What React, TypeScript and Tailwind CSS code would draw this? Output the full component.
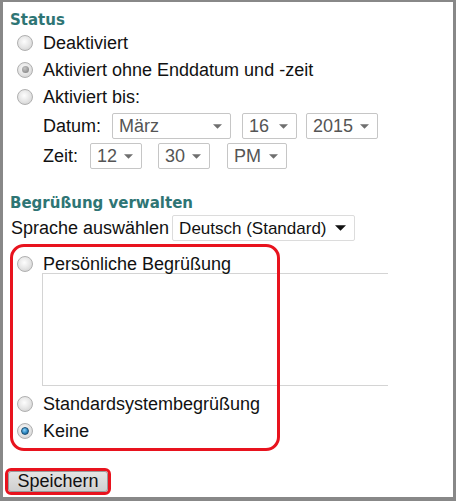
import React from 'react';

const Radio: React.FC<{ state?: 'off' | 'gray' | 'blue' }> = ({ state = 'off' }) => (
  <span className="relative flex h-[16px] w-[16px] shrink-0 items-center justify-center rounded-full border border-[#b0b0b0] bg-[radial-gradient(circle_at_45%_40%,#fdfdfd_0%,#e6e6e6_50%,#c9c9c9_100%)]">
    {state === 'gray' && <span className="h-[7px] w-[7px] rounded-full bg-[radial-gradient(circle_at_40%_35%,#c4c4c4_0%,#7a7a7a_100%)]" />}
    {state === 'blue' && (
      <span className="h-[8px] w-[8px] rounded-full border border-[#1b4f74] bg-[radial-gradient(circle_at_40%_35%,#8fd3fa_0%,#2e8ac4_55%,#144d78_100%)]" />
    )}
  </span>
);

const Arrow: React.FC<{ dark?: boolean }> = ({ dark }) => (
  <svg width={dark ? 11 : 9} height={dark ? 6 : 5} viewBox="0 0 10 5" className="shrink-0">
    <path d="M0 0 L10 0 L5 5 Z" fill={dark ? '#111' : '#6f6f6f'} />
  </svg>
);

const Select: React.FC<{ value: string; width: string; dark?: boolean }> = ({ value, width, dark }) => (
  <div
    className={`flex h-[26px] items-center justify-between whitespace-nowrap rounded-[2px] border pl-[6px] ${width} ${
      dark ? 'border-[#dcdcdc] pr-[8px] text-[17px] text-[#111]' : 'border-[#c6c6c6] pr-[8px] text-[#555]'
    }`}
  >
    <span className="leading-none">{value}</span>
    <Arrow dark={dark} />
  </div>
);

const RadioRow: React.FC<{ label: string; state?: 'off' | 'gray' | 'blue' }> = ({ label, state }) => (
  <div className="flex h-[27px] items-center pl-[14px]">
    <Radio state={state} />
    <span className="ml-[10px] leading-none">{label}</span>
  </div>
);

export default function App() {
  return (
    <div className="relative h-[501px] w-[456px] border-b-[4px] border-l-[3px] border-r-[3px] border-t-[2px] border-[#888] bg-white font-['Liberation_Sans',Arial,sans-serif] text-[18px] text-[#111]">
      {/* Status */}
      <div className="pl-[7px] pt-[9px]">
        <h3 className="h-[18px] font-['DejaVu_Sans',Verdana,sans-serif] text-[15px] font-bold leading-[18px] text-[#2e7574]">
          Status
        </h3>
      </div>
      <RadioRow label="Deaktiviert" />
      <RadioRow label="Aktiviert ohne Enddatum und -zeit" state="gray" />
      <RadioRow label="Aktiviert bis:" />

      <div className="mt-[3px] flex items-center pl-[40px]">
        <span className="w-[69px] leading-none">Datum:</span>
        <Select value="März" width="w-[119px]" />
        <div className="ml-[11px]">
          <Select value="16" width="w-[55px]" />
        </div>
        <div className="ml-[9px]">
          <Select value="2015" width="w-[72px]" />
        </div>
      </div>
      <div className="mt-[4px] flex items-center pl-[40px]">
        <span className="w-[47px] leading-none">Zeit:</span>
        <Select value="12" width="w-[52px]" />
        <div className="ml-[16px]">
          <Select value="30" width="w-[52px]" />
        </div>
        <div className="ml-[17px]">
          <Select value="PM" width="w-[60px]" />
        </div>
      </div>

      {/* Begrüßung */}
      <div className="mt-[25px] pl-[7px]">
        <h3 className="h-[18px] font-['DejaVu_Sans',Verdana,sans-serif] text-[15px] font-bold leading-[18px] text-[#2e7574]">
          Begrüßung verwalten
        </h3>
      </div>
      <div className="mt-[3px] flex items-center pl-[8px]">
        <span className="leading-none">Sprache auswählen</span>
        <div className="ml-[3px]">
          <Select value="Deutsch (Standard)" width="w-[183px]" dark />
        </div>
      </div>

      <div className="mt-[3px] pb-[7px] pt-[10px]">
        <div className="flex h-[19px] items-center pl-[14px]">
          <Radio />
          <span className="ml-[10px] leading-none">Persönliche Begrüßung</span>
        </div>
        <div className="ml-[39px] h-[113px] w-[346px] border border-r-0 border-[#d4d4d4]" />
        <div className="mt-[4px]">
          <RadioRow label="Standardsystembegrüßung" />
          <RadioRow label="Keine" state="blue" />
        </div>
      </div>

      <div className="mt-[17px] pl-[5px]">
        <button className="h-[21px] w-[100px] rounded-[3px] border border-[#9a9a9a] bg-[linear-gradient(#e4e4e4,#cfcfcf)] text-[18px] leading-none text-[#111] outline outline-[3px] outline-offset-[0px] outline-[#e8131e]">
          Speichern
        </button>
      </div>

      {/* red annotation */}
      <div className="pointer-events-none absolute left-[7px] top-[242px] h-[207px] w-[270px] rounded-[14px] border-[3px] border-[#e8131e]" />
    </div>
  );
}
